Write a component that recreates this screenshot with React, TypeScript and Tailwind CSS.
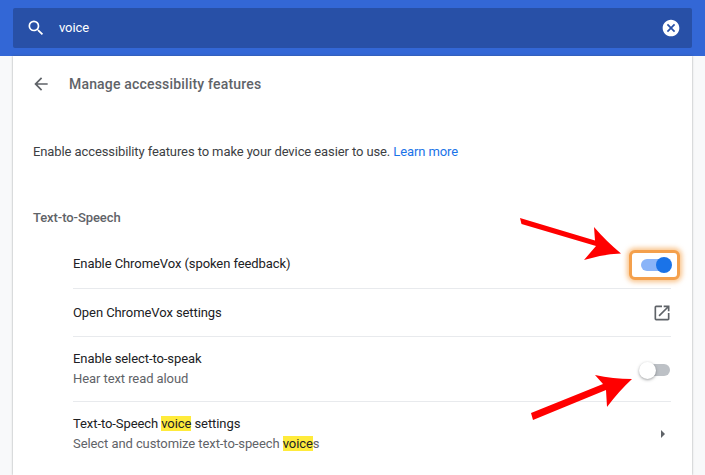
import React from "react";

function Mark({ children }: { children: React.ReactNode }) {
  return <span className="bg-[#ffeb3b] text-[#202124]">{children}</span>;
}

export default function App() {
  return (
    <div className="relative h-[475px] w-[705px] overflow-hidden bg-[#f8f9fa] font-['Roboto',sans-serif] text-[13px] tracking-[-0.08px]">
      <header className="h-[56px] bg-[#3367d6] px-[13px] pt-[8px]">
        <div className="flex h-[40px] items-center rounded-[2px] bg-[#2850a7] pl-[13px] pr-[11px] text-white">
          <svg width="20" height="20" viewBox="0 0 24 24" fill="#fff" className="mr-[13px]">
            <path d="M15.5 14h-.79l-.28-.27A6.47 6.47 0 0 0 16 9.5 6.5 6.5 0 1 0 9.5 16c1.61 0 3.09-.59 4.23-1.57l.27.28v.79l5 4.99L20.49 19l-4.99-5zm-6 0C7.01 14 5 11.99 5 9.5S7.01 5 9.5 5 14 7.01 14 9.5 11.99 14 9.5 14z" />
          </svg>
          <span className="flex-1">voice</span>
          <svg width="20" height="20" viewBox="0 0 24 24" fill="#fff">
            <path d="M12 2C6.47 2 2 6.47 2 12s4.47 10 10 10 10-4.47 10-10S17.53 2 12 2zm5 13.59L15.59 17 12 13.41 8.41 17 7 15.59 10.59 12 7 8.41 8.41 7 12 10.59 15.59 7 17 8.41 13.41 12 17 15.59z" />
          </svg>
        </div>
      </header>

      <main className="mx-[13px] h-[419px] bg-white shadow-[0_0_2px_rgba(60,64,67,0.5)]">
        <div className="flex h-[56px] items-center pl-[18px]">
          <svg width="20" height="20" viewBox="0 0 24 24" fill="#5f6368">
            <path d="M20 11H7.83l5.59-5.59L12 4l-8 8 8 8 1.41-1.41L7.83 13H20v-2z" />
          </svg>
          <h1 className="ml-[18px] text-[14px] font-medium tracking-[0.18px] text-[#5f6368]">Manage accessibility features</h1>
        </div>

        <p className="mt-[31px] pl-[20px] leading-[18px] tracking-[-0.1px] text-[#3c4043]">
          Enable accessibility features to make your device easier to use. <span className="text-[#1a73e8]">Learn more</span>
        </p>

        <h2 className="mt-[48px] pl-[20px] leading-[18px] font-medium text-[#5f6368]">Text-to-Speech</h2>

        <div className="mt-[15px] ml-[60px] mr-[21px] flex flex-col text-[#202124]">
          <div className="flex h-[47px] items-center justify-between border-b border-[#e8eaed]">
            <span className="pb-[2px]">Enable ChromeVox (spoken feedback)</span>
            <span className="relative mr-[-9px] flex h-[30px] w-[51px] items-center rounded-[6px] border-[3px] border-[#f4a04c] bg-white shadow-[0_0_5px_2px_rgba(245,154,56,0.6)]">
              <span className="ml-[9px] h-[12px] w-[26px] rounded-full bg-[#8ab4f8]" />
              <span className="absolute right-[5px] h-[16px] w-[16px] rounded-full bg-[#1a73e8]" />
            </span>
          </div>
          <div className="flex h-[48px] items-center justify-between border-b border-[#e8eaed]">
            <span>Open ChromeVox settings</span>
            <svg width="20" height="20" viewBox="0 0 24 24" fill="#5f6368" className="mr-[-1px]">
              <path d="M19 19H5V5h7V3H5a2 2 0 0 0-2 2v14a2 2 0 0 0 2 2h14c1.1 0 2-.9 2-2v-7h-2v7zM14 3v2h3.59l-9.83 9.83 1.41 1.41L19 6.41V10h2V3h-7z" />
            </svg>
          </div>
          <div className="flex h-[65px] items-center justify-between border-b border-[#e8eaed]">
            <div className="leading-[20px]">
              <div>Enable select-to-speak</div>
              <div className="text-[#5f6368]">Hear text read aloud</div>
            </div>
            <span className="relative mr-[1px] mt-[2px] flex h-[17px] w-[31px] items-center justify-end">
              <span className="h-[12px] w-[26px] rounded-full bg-[#bdc1c6]" />
              <span className="absolute left-0 h-[17px] w-[17px] rounded-full bg-white shadow-[0_1px_3px_rgba(60,64,67,0.5)]" />
            </span>
          </div>
          <div className="flex h-[65px] items-center justify-between">
            <div className="pb-[2px] leading-[20px]">
              <div>Text-to-Speech <Mark>voice</Mark> settings</div>
              <div className="text-[#5f6368]">Select and customize text-to-speech <Mark>voice</Mark>s</div>
            </div>
            <svg width="6" height="10" viewBox="0 0 6 10" fill="#5f6368" className="mr-[5px] mb-[1px]">
              <path d="M1 1l4 4-4 4z" />
            </svg>
          </div>
        </div>
      </main>

      <svg width="705" height="475" viewBox="0 0 705 475" className="pointer-events-none absolute left-0 top-0">
        <path fill="#ff0000" d="M520 218 L521.500 224 L596 246 L584 260 Q603 254 621 253.500 Q606 241 594 227 L595 240.500 Z" />
        <path fill="#ff0000" d="M531 413 L533 420 L606 390 L607 407 Q619 391 632 379 Q613 379 595 375 L603 384 Z" />
      </svg>
    </div>
  );
}
